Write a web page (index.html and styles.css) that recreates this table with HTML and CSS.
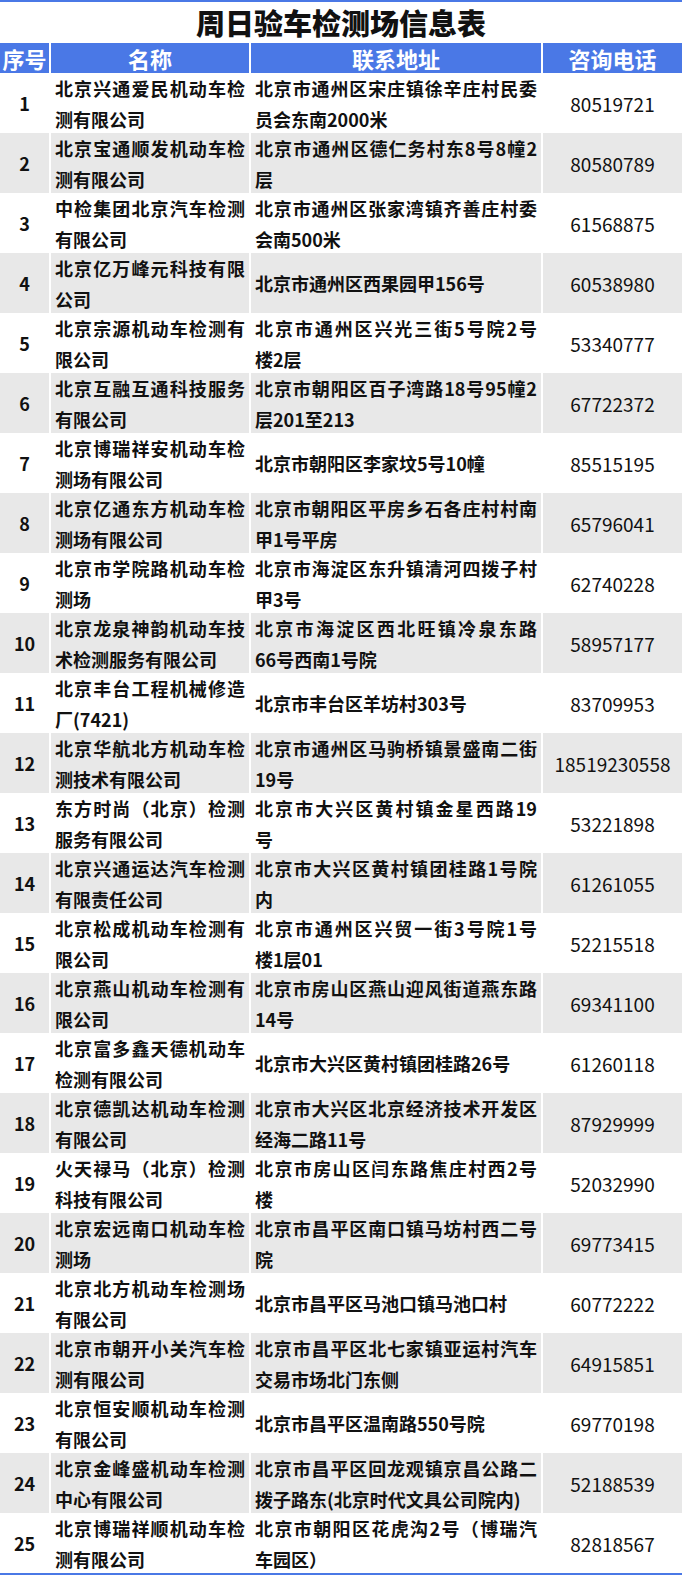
FILE: index.html
```html
<!DOCTYPE html>
<html lang="zh-CN">
<head>
<meta charset="utf-8">
<title>周日验车检测场信息表</title>
<link rel="stylesheet" href="styles.css">
</head>
<body>
<div class="sheet">
  <h1 class="title">周日验车检测场信息表</h1>
  <div class="table">
    <div class="hd">序号</div><div class="hd">名称</div><div class="hd">联系地址</div><div class="hd">咨询电话</div>

    <div class="c num">1</div><div class="c txt"><span class="ln">北京兴通爱民机动车检</span>测有限公司</div><div class="c txt"><span class="ln">北京市通州区宋庄镇徐辛庄村民委</span>员会东南2000米</div><div class="c tel">80519721</div>

    <div class="c num g">2</div><div class="c txt g"><span class="ln">北京宝通顺发机动车检</span>测有限公司</div><div class="c txt g"><span class="ln">北京市通州区德仁务村东8号8幢2</span>层</div><div class="c tel g">80580789</div>

    <div class="c num">3</div><div class="c txt"><span class="ln">中检集团北京汽车检测</span>有限公司</div><div class="c txt"><span class="ln">北京市通州区张家湾镇齐善庄村委</span>会南500米</div><div class="c tel">61568875</div>

    <div class="c num g">4</div><div class="c txt g"><span class="ln">北京亿万峰元科技有限</span>公司</div><div class="c txt g">北京市通州区西果园甲156号</div><div class="c tel g">60538980</div>

    <div class="c num">5</div><div class="c txt"><span class="ln">北京宗源机动车检测有</span>限公司</div><div class="c txt"><span class="ln">北京市通州区兴光三街5号院2号</span>楼2层</div><div class="c tel">53340777</div>

    <div class="c num g">6</div><div class="c txt g"><span class="ln">北京互融互通科技服务</span>有限公司</div><div class="c txt g"><span class="ln">北京市朝阳区百子湾路18号95幢2</span>层201至213</div><div class="c tel g">67722372</div>

    <div class="c num">7</div><div class="c txt"><span class="ln">北京博瑞祥安机动车检</span>测场有限公司</div><div class="c txt">北京市朝阳区李家坟5号10幢</div><div class="c tel">85515195</div>

    <div class="c num g">8</div><div class="c txt g"><span class="ln">北京亿通东方机动车检</span>测场有限公司</div><div class="c txt g"><span class="ln">北京市朝阳区平房乡石各庄村村南</span>甲1号平房</div><div class="c tel g">65796041</div>

    <div class="c num">9</div><div class="c txt"><span class="ln">北京市学院路机动车检</span>测场</div><div class="c txt"><span class="ln">北京市海淀区东升镇清河四拨子村</span>甲3号</div><div class="c tel">62740228</div>

    <div class="c num g">10</div><div class="c txt g"><span class="ln">北京龙泉神韵机动车技</span>术检测服务有限公司</div><div class="c txt g"><span class="ln">北京市海淀区西北旺镇冷泉东路</span>66号西南1号院</div><div class="c tel g">58957177</div>

    <div class="c num">11</div><div class="c txt"><span class="ln">北京丰台工程机械修造</span>厂(7421)</div><div class="c txt">北京市丰台区羊坊村303号</div><div class="c tel">83709953</div>

    <div class="c num g">12</div><div class="c txt g"><span class="ln">北京华航北方机动车检</span>测技术有限公司</div><div class="c txt g"><span class="ln">北京市通州区马驹桥镇景盛南二街</span>19号</div><div class="c tel g">18519230558</div>

    <div class="c num">13</div><div class="c txt"><span class="ln">东方时尚（北京）检测</span>服务有限公司</div><div class="c txt"><span class="ln">北京市大兴区黄村镇金星西路19</span>号</div><div class="c tel">53221898</div>

    <div class="c num g">14</div><div class="c txt g"><span class="ln">北京兴通运达汽车检测</span>有限责任公司</div><div class="c txt g"><span class="ln">北京市大兴区黄村镇团桂路1号院</span>内</div><div class="c tel g">61261055</div>

    <div class="c num">15</div><div class="c txt"><span class="ln">北京松成机动车检测有</span>限公司</div><div class="c txt"><span class="ln">北京市通州区兴贸一街3号院1号</span>楼1层01</div><div class="c tel">52215518</div>

    <div class="c num g">16</div><div class="c txt g"><span class="ln">北京燕山机动车检测有</span>限公司</div><div class="c txt g"><span class="ln">北京市房山区燕山迎风街道燕东路</span>14号</div><div class="c tel g">69341100</div>

    <div class="c num">17</div><div class="c txt"><span class="ln">北京富多鑫天德机动车</span>检测有限公司</div><div class="c txt">北京市大兴区黄村镇团桂路26号</div><div class="c tel">61260118</div>

    <div class="c num g">18</div><div class="c txt g"><span class="ln">北京德凯达机动车检测</span>有限公司</div><div class="c txt g"><span class="ln">北京市大兴区北京经济技术开发区</span>经海二路11号</div><div class="c tel g">87929999</div>

    <div class="c num">19</div><div class="c txt"><span class="ln">火天禄马（北京）检测</span>科技有限公司</div><div class="c txt"><span class="ln">北京市房山区闫东路焦庄村西2号</span>楼</div><div class="c tel">52032990</div>

    <div class="c num g">20</div><div class="c txt g"><span class="ln">北京宏远南口机动车检</span>测场</div><div class="c txt g"><span class="ln">北京市昌平区南口镇马坊村西二号</span>院</div><div class="c tel g">69773415</div>

    <div class="c num">21</div><div class="c txt"><span class="ln">北京北方机动车检测场</span>有限公司</div><div class="c txt">北京市昌平区马池口镇马池口村</div><div class="c tel">60772222</div>

    <div class="c num g">22</div><div class="c txt g"><span class="ln">北京市朝开小关汽车检</span>测有限公司</div><div class="c txt g"><span class="ln">北京市昌平区北七家镇亚运村汽车</span>交易市场北门东侧</div><div class="c tel g">64915851</div>

    <div class="c num">23</div><div class="c txt"><span class="ln">北京恒安顺机动车检测</span>有限公司</div><div class="c txt">北京市昌平区温南路550号院</div><div class="c tel">69770198</div>

    <div class="c num g">24</div><div class="c txt g"><span class="ln">北京金峰盛机动车检测</span>中心有限公司</div><div class="c txt g"><span class="ln">北京市昌平区回龙观镇京昌公路二</span>拨子路东(北京时代文具公司院内)</div><div class="c tel g">52188539</div>

    <div class="c num">25</div><div class="c txt"><span class="ln">北京博瑞祥顺机动车检</span>测有限公司</div><div class="c txt"><span class="ln">北京市朝阳区花虎沟2号（博瑞汽</span>车园区）</div><div class="c tel">82818567</div>
  </div>
</div>
</body>
</html>
```

FILE: styles.css
```css
html, body {
  margin: 0;
  padding: 0;
  background: #ffffff;
}

.sheet {
  width: 682px;
  border-top: 2px solid #4a78e6;
  border-bottom: 2px solid #4a78e6;
  font-family: "Noto Sans CJK SC", "Noto Sans", sans-serif;
  color: #111111;
}

.title {
  margin: 0;
  height: 41px;
  line-height: 40px;
  text-align: center;
  font-size: 29px;
  font-weight: 900;
  color: #111111;
}

.table {
  display: grid;
  grid-template-columns: 49px 198px 290px 139px;
  grid-template-rows: 30px;
  grid-auto-rows: 60px;
  column-gap: 2px;
}

.table .hd {
  background: #4a78e6;
  color: #ffffff;
  font-size: 22px;
  font-weight: 700;
  line-height: 30px;
  text-align: center;
}

.c {
  display: flex;
  align-items: center;
  font-size: 18px;
  font-weight: 600;
  line-height: 31px;
}

.c.g {
  background: #e8e8e8;
}

.num {
  justify-content: center;
}

.tel {
  justify-content: center;
  font-size: 19px;
  font-weight: 400;
}

.txt {
  display: block;
  padding: 0 4px 0 4px;
  text-align: left;
  align-content: center;
}

.ln {
  display: block;
  text-align: justify;
  text-align-last: justify;
}
```
